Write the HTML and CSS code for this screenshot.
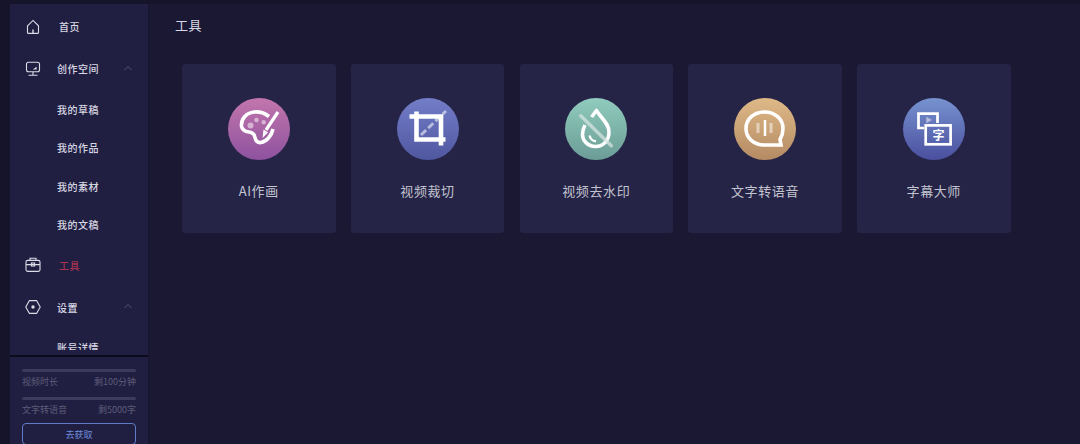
FILE: index.html
```html
<!DOCTYPE html>
<html lang="zh-CN">
<head>
    <meta charset="UTF-8">
    <meta name="viewport" content="width=device-width, initial-scale=1.0">
    <title>工具</title>
    <link rel="stylesheet" href="styles.css">
</head>
<body>

<div class="layout">
    <aside class="sidebar">
        <nav class="menu">
            <a class="menu-item home">
                <svg class="menu-icon" viewBox="0 0 16 16"><path d="M2.500 6.800 8 1.400l5.500 5.400v6.600a1 1 0 0 1-1 1h-9a1 1 0 0 1-1-1z"/><path class="solid" d="M7.300 10.500h1.400v3.400H7.300z"/></svg>
                <span>首页</span>
            </a>
            <a class="menu-item raised">
                <svg class="menu-icon" viewBox="0 0 16 16"><rect x="1.500" y="1.200" width="13" height="9.600" rx="2"/><path d="M8 11v3M3.500 14.300h9"/><path class="solid" d="M7.800 8.600 11.600 5.800v2.800z"/></svg>
                <span>创作空间</span>
                <svg class="arrow" viewBox="0 0 10 6"><path d="M1.500 5 5 1.500 8.500 5"/></svg>
            </a>
            <a class="menu-sub">我的草稿</a>
            <a class="menu-sub">我的作品</a>
            <a class="menu-sub">我的素材</a>
            <a class="menu-sub">我的文稿</a>
            <a class="menu-item active">
                <svg class="menu-icon" viewBox="0 0 16 16"><rect x="1" y="3.400" width="14" height="11" rx="1.600"/><path d="M5 3.400V1.200h6v2.200M1 7.600h14"/><rect x="6.400" y="6" width="3.200" height="3"/></svg>
                <span>工具</span>
            </a>
            <a class="menu-item">
                <svg class="menu-icon" viewBox="0 0 16 16"><path d="M4.400 1.600h7.200L15.200 8l-3.600 6.400H4.400L.8 8z"/><circle class="solid" cx="8" cy="8" r="1.700"/></svg>
                <span>设置</span>
                <svg class="arrow" viewBox="0 0 10 6"><path d="M1.500 5 5 1.500 8.500 5"/></svg>
            </a>
            <a class="menu-sub">账号详情</a>
        </nav>
        <div class="quota">
            <div class="bar"></div>
            <div class="quota-row"><span>视频时长</span><span>剩100分钟</span></div>
            <div class="bar"></div>
            <div class="quota-row"><span>文字转语音</span><span>剩5000字</span></div>
            <button class="get-btn">去获取</button>
        </div>
    </aside>

    <main class="content">
        <h1 class="page-title">工具</h1>
        <div class="tools">
            <div class="tool-card">
                <div class="tool-icon pink">
                    <svg viewBox="0 0 62 62">
                        <path class="line" d="M41 18.500C36 14.500 30 13.500 26 14 18 15 13 21 13.500 28 14 32 17 33.500 21 34 25 34.500 26.500 36 27 39.500 27.500 43 30 45 33 44.500 38.500 43.500 43.500 38 45 31"/>
                        <path class="brush" d="M50 14 38 32"/>
                        <path class="brush-tip" d="M35.500 31.500 40 34.500 34.500 40z"/>
                        <circle class="faint" cx="22.500" cy="27.500" r="3"/>
                        <circle class="faint" cx="28.500" cy="22" r="2.200"/>
                        <circle class="faint" cx="35.700" cy="24.300" r="2.200"/>
                    </svg>
                </div>
                <div class="tool-name">AI作画</div>
            </div>
            <div class="tool-card">
                <div class="tool-icon blue">
                    <svg viewBox="0 0 62 62">
                        <path class="line sq wide" d="M12.500 18.500H44V47.500M19.500 13.500V41.500H48.500"/>
                        <path class="dash" d="M24 37 49 13"/>
                    </svg>
                </div>
                <div class="tool-name">视频裁切</div>
            </div>
            <div class="tool-card">
                <div class="tool-icon green">
                    <svg viewBox="0 0 62 62">
                        <path class="line" d="M26.500 19C28 17 30 14.500 31.500 12.500 35 19 45 26 44 35 43.500 43 38 48.500 30.500 48.500 23 48.500 17.500 43 17.500 36 17.500 32.500 18.500 30 20 27"/>
                        <path class="thin" d="M24.700 37.500C25 40.500 27.500 43 31 43.200"/>
                        <path class="slash" d="M15.700 17.700 46.300 47.700"/>
                    </svg>
                </div>
                <div class="tool-name">视频去水印</div>
            </div>
            <div class="tool-card">
                <div class="tool-icon gold">
                    <svg viewBox="0 0 62 62">
                        <path class="line sq" d="M30.500 14C20 14 12 21 12 30.500S20 47 30.500 47H47L46 41.500C48 38 49 34.500 49 30.500 49 21 41 14 30.500 14z"/>
                        <path class="thin" d="M31 22V38"/>
                        <path class="soft" d="M24 25V35M37 25V35"/>
                    </svg>
                </div>
                <div class="tool-name">文字转语音</div>
            </div>
            <div class="tool-card">
                <div class="tool-icon indigo">
                    <svg viewBox="0 0 62 62">
                        <path class="line sq narrow" d="M21 30H15.500V15.700H34.500V25"/>
                        <path class="faint" d="M23.300 18.700 29 22 23.300 25.300z"/>
                        <rect class="line sq narrow" x="22.700" y="27.400" width="24.900" height="18.900"/>
                        <text class="icon-text" x="35.600" y="41.500">字</text>
                    </svg>
                </div>
                <div class="tool-name">字幕大师</div>
            </div>
        </div>
    </main>
</div>

</body>
</html>
```

FILE: styles.css
```css
* {
    box-sizing: border-box;
}

html, body {
    margin: 0;
    padding: 0;
    height: 100%;
    overflow: hidden;
}

body {
    font-family: "Noto Sans CJK SC", "Liberation Sans", sans-serif;
    background-color: #16142b;
    color: #d8d8e2;
}

.layout {
    display: flex;
    height: 444px;
    padding: 4px 0 0 10px;
}

.sidebar {
    width: 139px;
    flex-shrink: 0;
    display: flex;
    flex-direction: column;
    background-color: #201f42;
    border-right: 1px solid #17152e;
}

.menu {
    height: 346px;
    margin-bottom: 5px;
    overflow: hidden;
    flex-shrink: 0;
    padding-top: 2px;
}

.menu-item {
    display: flex;
    align-items: center;
    height: 42px;
    padding-left: 15px;
    font-size: 10px;
    font-weight: 500;
    letter-spacing: 0.5px;
    color: #d8d8e2;
}

.menu-item span {
    margin-left: 16px;
}

.menu-item.home span {
    margin-left: 18px;
    margin-top: -2px;
}

.menu-item.raised span {
    margin-top: -2px;
}

.menu-item.active span {
    margin-left: 18px;
    color: #a83350;
}

.menu-icon {
    width: 16px;
    height: 16px;
    fill: none;
    stroke: #dcdce6;
    stroke-width: 1.1;
}

.menu-icon .solid {
    fill: #dcdce6;
    stroke: none;
}

.arrow {
    width: 10px;
    height: 6px;
    margin-left: auto;
    margin-right: 15px;
    margin-top: -3px;
    fill: none;
    stroke: #55546f;
    stroke-width: 1;
}

.menu-sub {
    display: flex;
    align-items: center;
    height: 38.5px;
    padding-left: 47px;
    font-size: 10px;
    font-weight: 500;
    letter-spacing: 0.5px;
    color: #d8d8e2;
}

.quota {
    flex: 1;
    padding: 12px 12px 0;
    border-top: 2px solid #0c0b1a;
    font-size: 9px;
    color: #5e5c78;
}

.bar {
    height: 3px;
    border-radius: 2px;
    background-color: #3d3b5c;
}

.quota-row {
    display: flex;
    justify-content: space-between;
    height: 25px;
    padding-top: 3px;
    line-height: 14px;
}

.get-btn {
    display: block;
    width: 100%;
    height: 22px;
    margin-top: -2px;
    padding: 0;
    border: 1px solid #5f7cc8;
    border-radius: 4px;
    background: transparent;
    color: #6f8ddd;
    font-family: inherit;
    font-size: 9px;
}

.content {
    flex: 1;
    background-color: #1a1833;
}

.page-title {
    margin: 0;
    padding: 11px 0 0 26px;
    font-size: 13px;
    font-weight: 400;
    line-height: 20px;
    letter-spacing: 0.6px;
    color: #d8d8e2;
}

.tools {
    display: flex;
    gap: 15.25px;
    margin: 29px 0 0 33px;
}

.tool-card {
    width: 153.5px;
    height: 169px;
    padding-top: 33.5px;
    border-radius: 3px;
    background-color: #252447;
    text-align: center;
}

.tool-icon {
    width: 62px;
    height: 62px;
    margin: 0 auto;
    border-radius: 50%;
}

.tool-icon svg {
    display: block;
    width: 62px;
    height: 62px;
    fill: none;
}

.pink {
    background: linear-gradient(180deg, #c276ac, #8e529f);
}

.blue {
    background: linear-gradient(180deg, #737dc8, #4f579f);
}

.green {
    background: linear-gradient(180deg, #90cbbd, #6b9d96);
}

.gold {
    background: linear-gradient(180deg, #deb987, #b58b64);
}

.indigo {
    background: linear-gradient(180deg, #7792cf, #4a4f9f);
}

.line {
    stroke: #fff;
    stroke-width: 3.6;
    fill: none;
    stroke-linejoin: round;
}

.line.sq {
    stroke-linejoin: miter;
}

.line.wide {
    stroke-width: 4.6;
}

.line.narrow {
    stroke-width: 2.7;
}

.brush {
    stroke: #fff;
    stroke-width: 3.2;
}

.brush-tip {
    fill: #fff;
}

.faint {
    fill: #ffffff;
    opacity: 0.5;
}

.dash {
    stroke: #ffffff;
    stroke-opacity: 0.55;
    stroke-width: 3;
    stroke-dasharray: 7 3;
}

.thin {
    stroke: #fff;
    stroke-width: 2.5;
    fill: none;
}

.slash {
    stroke: #d4e4e0;
    stroke-opacity: 0.75;
    stroke-width: 3.4;
    stroke-linecap: round;
}

.soft {
    stroke: #fff;
    stroke-opacity: 0.5;
    stroke-width: 3;
}

.icon-text {
    fill: #fff;
    font-size: 12px;
    font-weight: 700;
    text-anchor: middle;
}

.tool-name {
    margin-top: 21px;
    font-size: 13px;
    line-height: 20px;
    letter-spacing: 0.6px;
    color: #c4c4d0;
}
```
